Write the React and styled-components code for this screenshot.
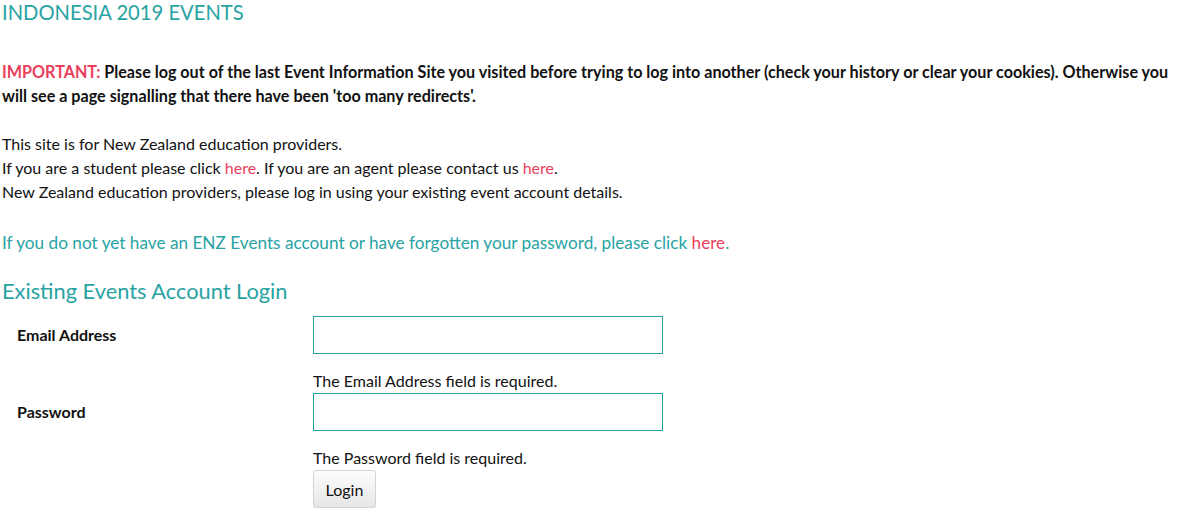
import React from 'react';
import styled, { createGlobalStyle } from 'styled-components';

const GlobalStyle = createGlobalStyle`
  body {
    margin: 0;
    background: #fff;
    font-family: Lato, "Open Sans", sans-serif;
    color: #111;
  }
`;

const TEAL = '#28a3a3';
const RED = '#e9415c';

const Page = styled.div`
  padding: 0 2px;
  width: 1172px;
`;

const Title = styled.h1`
  margin: 0;
  font-size: 20.2px;
  line-height: 24px;
  font-weight: 400;
  color: ${TEAL};
`;

const Notice = styled.p`
  margin: 36px 0 24px;
  font-size: 16.15px;
  line-height: 24px;
  font-weight: 700;
`;

const Important = styled.span`
  color: ${RED};
`;

const Intro = styled.p`
  margin: 0;
  font-size: 16px;
  line-height: 24px;
`;

const Link = styled.a`
  color: ${RED};
  text-decoration: none;
`;

const Account = styled.p`
  margin: 27px 0 0;
  font-size: 17.2px;
  line-height: 24px;
  color: ${TEAL};
`;

const SubTitle = styled.h2`
  margin: 22px 0 0;
  font-size: 21.8px;
  line-height: 28px;
  font-weight: 400;
  color: ${TEAL};
`;

const Form = styled.form`
  margin-top: 11px;
  display: grid;
  grid-template-columns: 311px 350px;
`;

const Label = styled.label`
  padding-left: 15px;
  display: flex;
  align-items: center;
  height: 37px;
  font-size: 16px;
  font-weight: 700;
`;

const Field = styled.div`
  display: flex;
  flex-direction: column;
`;

const Input = styled.input`
  box-sizing: border-box;
  width: 350px;
  height: 38px;
  border: 1px solid ${TEAL};
  outline: none;
  padding: 6px 10px;
  font: inherit;
`;

const Help = styled.div`
  margin-top: 15px;
  font-size: 16px;
  line-height: 24px;
`;

const Spacer = styled.div``;

const Button = styled.button`
  box-sizing: border-box;
  width: 63px;
  height: 38px;
  border: 1px solid #d4d4d4;
  border-radius: 3px;
  background: linear-gradient(to bottom, #fdfdfd, #e6e6e6);
  font-family: inherit;
  font-size: 16px;
  color: #111;
  box-shadow: 0 1px 1px rgba(0, 0, 0, 0.08);
`;

export default function App() {
  return (
    <>
      <GlobalStyle />
      <Page>
        <Title>INDONESIA 2019 EVENTS</Title>
        <Notice>
          <Important>IMPORTANT:</Important> Please log out of the last Event Information Site you visited before trying to log into another (check your history or clear your cookies). Otherwise you will see a page signalling that there have been 'too many redirects'.
        </Notice>
        <Intro>
          This site is for New Zealand education providers.
          <br />
          If you are a student please click <Link href="#">here</Link>. If you are an agent please contact us <Link href="#">here</Link>.
          <br />
          New Zealand education providers, please log in using your existing event account details.
        </Intro>
        <Account>
          If you do not yet have an ENZ Events account or have forgotten your password, please click <Link href="#">here</Link>.
        </Account>
        <SubTitle>Existing Events Account Login</SubTitle>
        <Form onSubmit={(e) => e.preventDefault()}>
          <Label htmlFor="email">Email Address</Label>
          <Field>
            <Input id="email" type="text" />
            <Help>The Email Address field is required.</Help>
          </Field>
          <Label htmlFor="password">Password</Label>
          <Field>
            <Input id="password" type="password" />
            <Help>The Password field is required.</Help>
          </Field>
          <Spacer />
          <Field>
            <Button type="submit">Login</Button>
          </Field>
        </Form>
      </Page>
    </>
  );
}
